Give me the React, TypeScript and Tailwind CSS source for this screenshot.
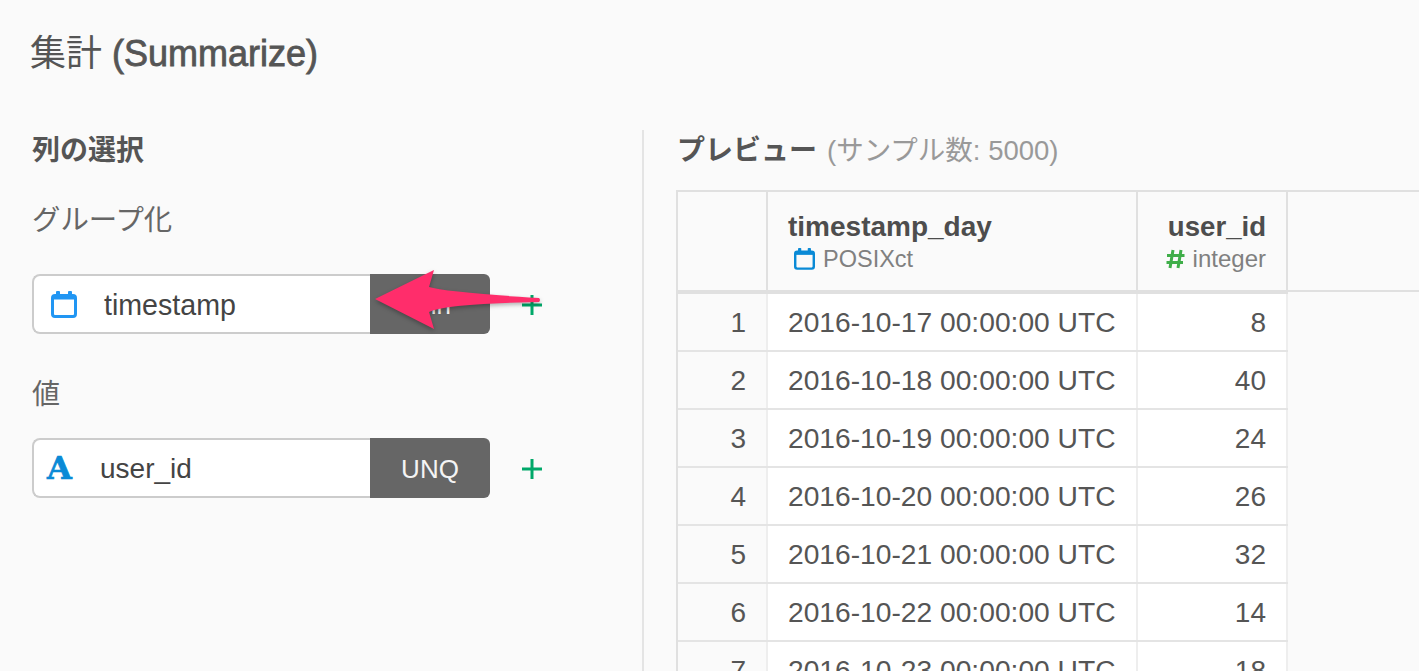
const rows = [
  ["1", "2016-10-17 00:00:00 UTC", "8"],
  ["2", "2016-10-18 00:00:00 UTC", "40"],
  ["3", "2016-10-19 00:00:00 UTC", "24"],
  ["4", "2016-10-20 00:00:00 UTC", "26"],
  ["5", "2016-10-21 00:00:00 UTC", "32"],
  ["6", "2016-10-22 00:00:00 UTC", "14"],
  ["7", "2016-10-23 00:00:00 UTC", "18"],
];

const font = { fontFamily: '"Liberation Sans", "Noto Sans CJK JP", sans-serif' };

function CalendarIcon({ color, size }: { color: string; size: number }) {
  return (
    <svg width={size} height={size + 2} viewBox="0 0 26 28" fill="none" className="block">
      <rect x="1.5" y="5.5" width="23" height="21" rx="2.5" stroke={color} strokeWidth="3" />
      <rect x="1.5" y="5" width="23" height="4.5" fill={color} />
      <rect x="5" y="1" width="4" height="6" rx="1" fill={color} />
      <rect x="17" y="1" width="4" height="6" rx="1" fill={color} />
    </svg>
  );
}

function Plus() {
  return (
    <svg width="22" height="22" viewBox="0 0 22 22" className="block shrink-0">
      <path d="M11 1v20M1 11h20" stroke="#00a869" strokeWidth="3" />
    </svg>
  );
}

function Field({
  icon,
  name,
  nameClass,
  tag,
}: {
  icon: React.ReactNode;
  name: string;
  nameClass: string;
  tag: string;
}) {
  return (
    <div className="flex items-center">
      <div className="flex h-[60px] w-[338px] items-center rounded-l-[8px] border-2 border-r-0 border-[#cccccc] bg-white text-[28px] text-[#444444]">
        <span className="flex w-[64px] shrink-0">{icon}</span>
        <span className={nameClass}>{name}</span>
      </div>
      <div className="flex h-[60px] w-[120px] items-center justify-center rounded-r-[6px] bg-[#666666] pt-[2px] text-[26px] text-[#f4f4f4]">
        {tag}
      </div>
      <span className="ml-[31px] pt-[1px]">
        <Plus />
      </span>
    </div>
  );
}

function Row({ n, date, val }: { n: string; date: string; val: string }) {
  return (
    <div className="flex h-[58px] w-[610px] border-b-2 border-[#e4e4e4] text-[28px] text-[#555555]">
      <div className="flex w-[90px] shrink-0 items-center justify-end border-r-2 border-[#eeeeee] bg-[#fafafa] pr-[20px] pt-[2px]">{n}</div>
      <div className="flex w-[370px] shrink-0 items-center border-r-2 border-[#eeeeee] bg-white pl-[20px] text-[28.2px]">{date}</div>
      <div className="flex w-[150px] shrink-0 items-center justify-end border-r-2 border-[#eeeeee] bg-white pr-[20px] pt-[2px]">{val}</div>
    </div>
  );
}

export default function App() {
  return (
    <div className="relative h-[671px] w-[1419px] overflow-hidden bg-[#fafafa]" style={font}>
      <h1 className="flex h-[108px] items-center pl-[30px] text-[36px] font-normal text-[#555555] [-webkit-text-stroke:0.8px_#555555]">
        <span className="[-webkit-text-stroke:0px]">集計</span>&nbsp;(Summarize)
      </h1>
      <div className="mt-[22px] flex">
        <div className="w-[642px] shrink-0 pl-[32px]">
          <div className="flex h-[40px] items-center pt-[2px] text-[28px] font-bold text-[#555555]">列の選択</div>
          <div className="mt-[29px] flex h-[40px] items-center pt-[3px] text-[28.4px] text-[#666666]">グループ化</div>
          <div className="mt-[35px]">
            <Field
              icon={
                <span className="pl-[17px]">
                  <CalendarIcon color="#2196f3" size={26} />
                </span>
              }
              name="timestamp"
              nameClass="pl-[6px] pt-[2px] text-[28.6px]"
              tag="Min"
            />
          </div>
          <div className="mt-[40px] flex h-[40px] items-center pt-[2px] text-[28px] text-[#666666]">値</div>
          <div className="mt-[24px]">
            <Field
              icon={
                <span className="pl-[13px] font-['DejaVu_Serif'] text-[32px] font-bold leading-none text-[#0a8ad6] [-webkit-text-stroke:0.7px_#0a8ad6]">
                  A
                </span>
              }
              name="user_id"
              nameClass="pl-[2px] pt-[2px]"
              tag="UNQ"
            />
          </div>
        </div>
        <div className="h-[600px] w-[2px] shrink-0 bg-[#e4e4e4]" />
        <div className="min-w-0 flex-1 pl-[32px]">
          <div className="flex h-[40px] items-center whitespace-nowrap pl-[1px] pt-[2px] text-[28px] text-[#999999]">
            <span className="mr-[10px] font-bold text-[#555555]">プレビュー</span>
            <span className="text-[27.5px]">(サンプル数: 5000)</span>
          </div>
          <div className="mt-[20px] border-l-2 border-[#e0e0e0]">
            <div className="flex h-[102px] border-y-2 border-[#e0e0e0]">
              <div className="w-[90px] shrink-0 border-r-2 border-[#e0e0e0]" />
              <div className="flex w-[370px] shrink-0 flex-col justify-center border-r-2 border-[#e0e0e0] pl-[20px]">
                <div className="pt-[1px] text-[28px] font-bold leading-[34px] text-[#4d4d4d]">timestamp_day</div>
                <div className="flex items-center gap-[8px] pl-[6px] text-[23.5px] leading-[30px] text-[#808080]">
                  <CalendarIcon color="#0a8ad6" size={21} />
                  <span>POSIXct</span>
                </div>
              </div>
              <div className="flex w-[150px] shrink-0 flex-col items-end justify-center border-r-2 border-[#e0e0e0] pr-[20px]">
                <div className="pt-[1px] text-[27.6px] font-bold leading-[34px] text-[#4d4d4d]">user_id</div>
                <div className="flex items-center gap-[8px] text-[24px] leading-[30px] text-[#808080]">
                  <svg width="19" height="20" viewBox="0 0 19 20" fill="none" stroke="#3fae49" strokeWidth="3">
                    <path d="M7 1 4 19M15 1l-3 18M1 6.5h17.5M0.5 13.5H17" />
                  </svg>
                  <span>integer</span>
                </div>
              </div>
            </div>
            <div className="w-[610px] border-t-2 border-[#e0e0e0]">
              {rows.map((r) => (
                <Row key={r[0]} n={r[0]} date={r[1]} val={r[2]} />
              ))}
            </div>
          </div>
        </div>
      </div>
      <svg
        className="pointer-events-none absolute left-[360px] top-[260px] drop-shadow-[0_2px_2px_rgba(0,0,0,0.3)]"
        width="200"
        height="85"
        viewBox="360 260 200 85"
      >
        <path
          d="M375 299 434 270 429 287Q445 292 539 298Q541 300 539 302Q445 304 429 312L434 329Z"
          fill="#ff2d6b"
        />
      </svg>
    </div>
  );
}
